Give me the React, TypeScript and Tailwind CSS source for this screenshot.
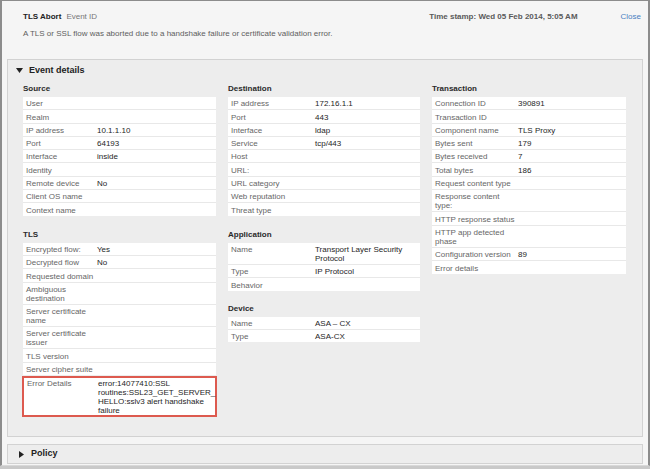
import React from "react";

type Row = { label: React.ReactNode; value?: React.ReactNode; highlight?: boolean };

const FONT = { fontFamily: '"Liberation Sans", Arial, Helvetica, sans-serif' };

function Caret({ open }: { open: boolean }) {
  return open ? (
    <svg width="7" height="5" viewBox="0 0 7 5" className="shrink-0">
      <path d="M0 0 L7 0 L3.5 5 Z" fill="#222" />
    </svg>
  ) : (
    <svg width="5" height="7" viewBox="0 0 5 7" className="shrink-0">
      <path d="M0 0 L5 3.5 L0 7 Z" fill="#222" />
    </svg>
  );
}

function Section({
  title,
  rows,
  labelWidth,
  className = "",
}: {
  title?: string;
  rows: Row[];
  labelWidth: string;
  className?: string;
}) {
  return (
    <div className={className}>
      {title ? (
        <div className="mb-[3px] text-[8px] font-bold leading-[10px] text-[#2a2a2a]">{title}</div>
      ) : null}
      <div className="bg-white">
        {rows.map((row, index) => (
          <div
            key={index}
            className={
              row.highlight
                ? "-mx-px flex border-2 border-[#dd5a4f] pb-0 pt-[1px] leading-[9px]"
                : "flex border-b border-[#e8e8e8] pb-px pt-[2.3px] leading-[9px] last:border-b-0"
            }
          >
            <div className={`${labelWidth} shrink-0 pl-[3px] text-[#666]`}>{row.label}</div>
            <div className="min-w-0 flex-1 text-[#1e1e1e]">{row.value}</div>
          </div>
        ))}
      </div>
    </div>
  );
}

const two = (a: string, b: string) => (
  <>
    {a}
    <br />
    {b}
  </>
);

const source: Row[] = [
  { label: "User" },
  { label: "Realm" },
  { label: "IP address", value: "10.1.1.10" },
  { label: "Port", value: "64193" },
  { label: "Interface", value: "inside" },
  { label: "Identity" },
  { label: "Remote device", value: "No" },
  { label: "Client OS name" },
  { label: "Context name" },
];

const tls: Row[] = [
  { label: "Encrypted flow:", value: "Yes" },
  { label: "Decrypted flow", value: "No" },
  { label: "Requested domain" },
  { label: two("Ambiguous", "destination") },
  { label: two("Server certificate", "name") },
  { label: two("Server certificate", "issuer") },
  { label: "TLS version" },
  { label: "Server cipher suite" },
];

const errorRow: Row[] = [
  {
    label: "Error Details",
    highlight: true,
    value: (
      <>
        error:14077410:SSL
        <br />
        routines:SSL23_GET_SERVER_
        <br />
        HELLO:sslv3 alert handshake
        <br />
        failure
      </>
    ),
  },
];

const destination: Row[] = [
  { label: "IP address", value: "172.16.1.1" },
  { label: "Port", value: "443" },
  { label: "Interface", value: "ldap" },
  { label: "Service", value: "tcp/443" },
  { label: "Host" },
  { label: "URL:" },
  { label: "URL category" },
  { label: "Web reputation" },
  { label: "Threat type" },
];

const application: Row[] = [
  { label: "Name", value: two("Transport Layer Security", "Protocol") },
  { label: "Type", value: "IP Protocol" },
  { label: "Behavior" },
];

const device: Row[] = [
  { label: "Name", value: "ASA – CX" },
  { label: "Type", value: "ASA-CX" },
];

const transaction: Row[] = [
  { label: "Connection ID", value: "390891" },
  { label: "Transaction ID" },
  { label: "Component name", value: "TLS Proxy" },
  { label: "Bytes sent", value: "179" },
  { label: "Bytes received", value: "7" },
  { label: "Total bytes", value: "186" },
  { label: "Request content type" },
  { label: two("Response content", "type:") },
  { label: "HTTP response status" },
  { label: two("HTTP app detected", "phase") },
  { label: "Configuration version", value: "89" },
  { label: "Error details" },
];

export default function App() {
  return (
    <div style={FONT} className="h-[469px] w-[650px] overflow-hidden bg-[#c9c9c9] text-[8px]">
      <div className="h-[466px] border-x-2 border-t border-b border-[#8c8c8c] border-b-[#d8d8d8] bg-[#f5f5f5]">
        {/* header */}
        <div className="h-[58px] pl-[21px] pr-[7px] pt-[11px]">
          <div className="flex items-center leading-[10px]">
            <span className="font-bold text-[#222]">TLS Abort</span>
            <span className="ml-[5px] text-[#777]">Event ID</span>
            <span className="ml-auto font-bold text-[#5a5a5a]">Time stamp: Wed 05 Feb 2014, 5:05 AM</span>
            <span className="ml-[43px] text-[#4a80c2]">Close</span>
          </div>
          <div className="mt-[7px] leading-[10px] text-[#5e5e5e]">
            A TLS or SSL flow was aborted due to a handshake failure or certificate validation error.
          </div>
        </div>

        {/* event details */}
        <div className="mx-[5px] h-[378px] border border-[#d2d2d2] bg-[#ededed]">
          <div className="flex h-[21px] items-center gap-[6px] pl-[8px]">
            <Caret open />
            <span className="text-[9px] font-bold text-[#222]">Event details</span>
          </div>
          <div className="grid grid-cols-[193px_192px_194px] gap-x-[12px] pl-[15px] pt-[3px]">
            <div>
              <Section title="Source" rows={source} labelWidth="w-[74px]" />
              <Section title="TLS" rows={tls} labelWidth="w-[74px]" className="mt-[14px]" />
              <Section rows={errorRow} labelWidth="w-[74px]" className="mt-[1px]" />
            </div>
            <div>
              <Section title="Destination" rows={destination} labelWidth="w-[87px]" />
              <Section title="Application" rows={application} labelWidth="w-[87px]" className="mt-[14px]" />
              <Section title="Device" rows={device} labelWidth="w-[87px]" className="mt-[13px]" />
            </div>
            <div>
              <Section title="Transaction" rows={transaction} labelWidth="w-[86px]" />
            </div>
          </div>
        </div>

        {/* policy */}
        <div className="mx-[5px] mt-[7px] flex h-[20px] items-center gap-[7px] border border-[#d2d2d2] bg-[#ededed] pl-[11px]">
          <Caret open={false} />
          <span className="text-[9px] font-bold text-[#222]">Policy</span>
        </div>
      </div>
    </div>
  );
}
